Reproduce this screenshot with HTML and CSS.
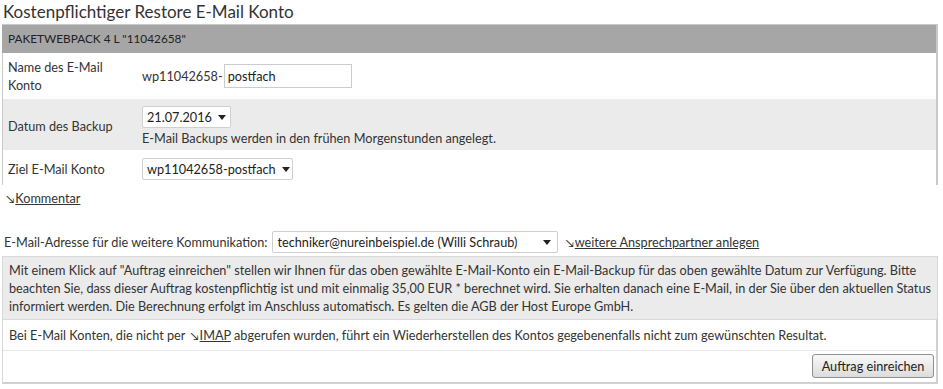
FILE: index.html
```html
<!DOCTYPE html>
<html lang="de">
<head>
<meta charset="utf-8">
<title>Kostenpflichtiger Restore E-Mail Konto</title>
<link rel="stylesheet" href="styles.css">
</head>
<body>
<h1 class="title">Kostenpflichtiger Restore E-Mail Konto</h1>

<div class="panel">
  <div class="panel-head">PAKETWEBPACK 4 L "11042658"</div>
  <div class="row row-white row-name">
    <div class="label">Name des E-Mail Konto</div>
    <div class="value">
      <span class="prefix">wp11042658-</span><span class="input">postfach</span>
    </div>
  </div>
  <div class="row row-grey row-date">
    <div class="label">Datum des Backup</div>
    <div class="value stack">
      <div class="select select-date"><span>21.07.2016</span><svg class="caret" width="8" height="5" viewBox="0 0 8 5"><path d="M0 0H8L4 5Z"/></svg></div>
      <div class="hint">E-Mail Backups werden in den frühen Morgenstunden angelegt.</div>
    </div>
  </div>
  <div class="row row-white row-target">
    <div class="label">Ziel E-Mail Konto</div>
    <div class="value">
      <div class="select select-target"><span>wp11042658-postfach</span><svg class="caret" width="8" height="5" viewBox="0 0 8 5"><path d="M0 0H8L4 5Z"/></svg></div>
    </div>
  </div>
</div>

<div class="comment-line"><span class="arrow">↘</span><a class="link" href="#">Kommentar</a></div>

<div class="contact-line">
  <span class="contact-label">E-Mail-Adresse für die weitere Kommunikation:</span>
  <div class="select select-contact"><span>techniker@nureinbeispiel.de (Willi Schraub)</span><svg class="caret" width="8" height="5" viewBox="0 0 8 5"><path d="M0 0H8L4 5Z"/></svg></div>
  <span class="contact-link"><span class="arrow">↘</span><a class="link" href="#">weitere Ansprechpartner anlegen</a></span>
</div>

<div class="notice">Mit einem Klick auf "Auftrag einreichen" stellen wir Ihnen für das oben gewählte E-Mail-Konto ein E-Mail-Backup für das oben gewählte Datum zur Verfügung. Bitte beachten Sie, dass dieser Auftrag kostenpflichtig ist und mit einmalig 35,00 EUR * berechnet wird. Sie erhalten danach eine E-Mail, in der Sie über den aktuellen Status informiert werden. Die Berechnung erfolgt im Anschluss automatisch. Es gelten die AGB der Host Europe GmbH.</div>

<div class="submit-box">
  <div class="imap-line">Bei E-Mail Konten, die nicht per <span class="arrow imap-arrow">↘</span><a class="link" href="#">IMAP</a> abgerufen wurden, führt ein Wiederherstellen des Kontos gegebenenfalls nicht zum gewünschten Resultat.</div>
  <div class="button-row"><button class="btn" type="button">Auftrag einreichen</button></div>
</div>

<p class="footnote">* Bitte beachten Sie, dass der hier angezeigte Preis 19% Mehrwertsteuer für Deutschland enthält. Abhängig vom Mehrwertsteuersatz Ihres Landes kann der tatsächliche Preis abweichen.</p>
</body>
</html>
```

FILE: styles.css
```css
* { box-sizing: border-box; }

body {
  margin: 0;
  padding: 0 5px 0 2px;
  font-family: Lato, "Open Sans", sans-serif;
  font-size: 12.7px;
  line-height: 18px;
  color: #333;
  background: #fff;
}

.title {
  margin: 0;
  padding: 0 0 0 1px;
  font-size: 17px;
  font-weight: normal;
  line-height: 24px;
  color: #333;
}

.panel {
  border-top: 1px solid #c9c9c9;
  border-right: 2px solid #c9c9c9;
}

.panel-head {
  background: #a6a6a6;
  color: #222;
  font-size: 11.8px;
  height: 28px;
  line-height: 28px;
  padding-left: 6px;
}

.row {
  display: flex;
  align-items: center;
  border-left: 1px solid #c9c9c9;
}

.row-white { background: #fff; }
.row-grey { background: #ebebeb; }

.row-name { height: 46px; }
.row-date { height: 51px; padding-top: 3px; }
.row-target { height: 35px; padding-top: 2px; }

.label {
  width: 139px;
  padding-left: 5px;
  padding-right: 22px;
  flex: none;
}

.value {
  display: flex;
  align-items: center;
  white-space: nowrap;
}

.value.stack {
  flex-direction: column;
  align-items: flex-start;
}

.prefix { margin-right: 1px; }

.input {
  display: inline-block;
  width: 128px;
  height: 24px;
  line-height: 22px;
  border: 1px solid #ccc;
  padding: 0 3px;
  background: #fff;
  color: #222;
}

.select {
  display: inline-flex;
  align-items: center;
  justify-content: space-between;
  white-space: nowrap;
  height: 22px;
  border: 1px solid #cfcfcf;
  border-radius: 2px;
  background: #fff;
  padding: 0 6px 0 4px;
  color: #222;
  line-height: 20px;
}

.caret { fill: #222; flex: none; margin-top: 1px; margin-left: 6px; }

.select-date { width: 89px; }
.hint { margin-top: 1px; }
.select-target { width: 151px; }

.comment-line {
  margin: 4px 0 0 4px;
  height: 18px;
}

.arrow {
  font-size: 11px;
  color: #333;
  margin-right: 1px;
}

.link {
  color: #333;
  text-decoration: underline;
}

.contact-line {
  display: flex;
  align-items: center;
  white-space: nowrap;
  margin-top: 24px;
  padding-left: 2px;
  height: 22px;
}

.contact-label { margin-right: 5px; }

.select-contact {
  width: 286px;
  height: 22px;
  margin-right: 7px;
}

.notice {
  margin-top: 3px;
  background: #ebebeb;
  border: 1px solid #d8d8d8;
  border-bottom: none;
  padding: 4px 6px;
  line-height: 18px;
}

.submit-box {
  border: 1px solid #d8d8d8;
  border-right: 2px solid #d0d0d0;
  border-bottom: 2px solid #d0d0d0;
}

.imap-line {
  padding: 6px 6px 5px;
  line-height: 18px;
}

.imap-arrow { margin-left: 2px; }

.button-row {
  display: flex;
  justify-content: flex-end;
  border-top: 1px solid #e6e6e6;
  padding: 3px 2px 4px;
}

.btn {
  font-family: inherit;
  font-size: 12.7px;
  color: #222;
  width: 122px;
  height: 24px;
  border: 1px solid #8f8f8f;
  border-radius: 3px;
  background: linear-gradient(#f8f8f8, #dcdcdc);
  padding: 0;
}

.footnote {
  margin: 1px 0 0 0;
  white-space: nowrap;
  overflow: hidden;
}
```
